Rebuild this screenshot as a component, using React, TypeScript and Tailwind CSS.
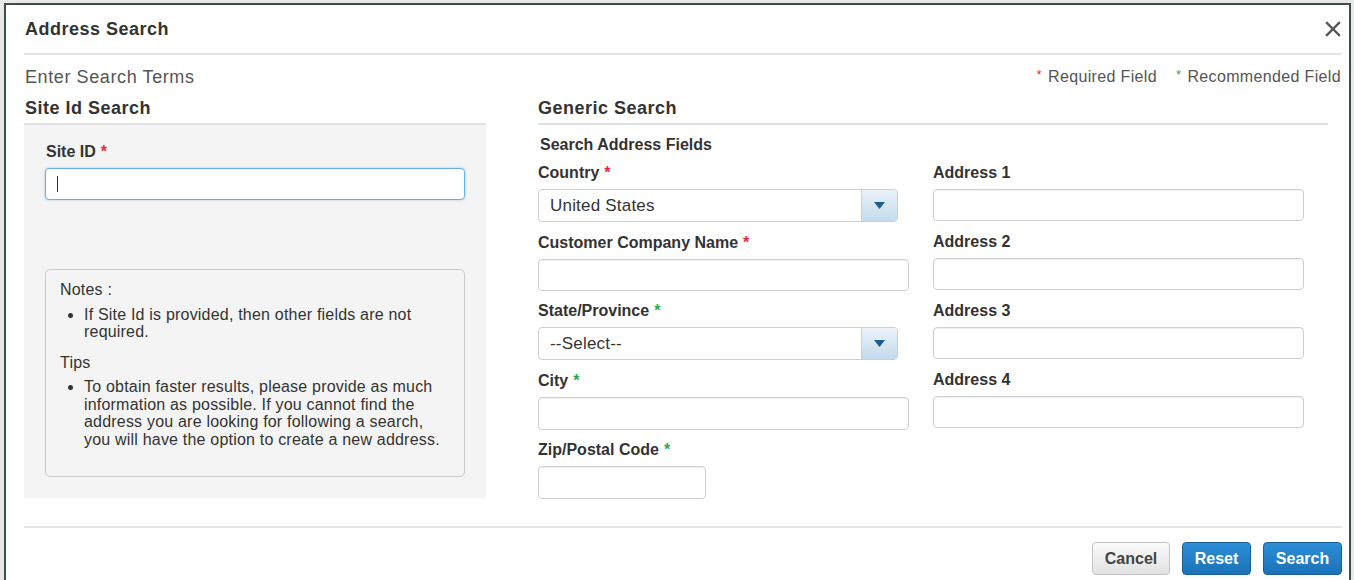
import React from "react";

const font = { fontFamily: '"Liberation Sans", Arial, sans-serif' };

function Star({ color }: { color: "red" | "green" }) {
	return (
		<span
			className={
				color === "red"
					? "ml-[5px] text-[#f0263c]"
					: "ml-[5px] text-[#2fa84f]"
			}
		>
			*
		</span>
	);
}

function Label({
	children,
	star,
}: {
	children: React.ReactNode;
	star?: "red" | "green";
}) {
	return (
		<div className="h-[20px] leading-[20px] text-[16px] font-bold text-[#333]">
			{children}
			{star && <Star color={star} />}
		</div>
	);
}

function TextInput({ w = "w-[371px]", h = "h-[32px]" }: { w?: string; h?: string }) {
	return (
		<input
			className={`${w} ${h} mt-[6px] rounded-[4px] border border-[#cfcfcf] bg-white px-3 text-[16px] text-[#333] shadow-[inset_0_1px_1px_rgba(0,0,0,0.06)] outline-none`}
		/>
	);
}

function Select({ value }: { value: string }) {
	return (
		<div className="mt-[6px] flex h-[33px] w-[360px] overflow-hidden rounded-[4px] border border-[#cfcfcf] bg-white">
			<div className="flex flex-1 items-center pl-[11px] text-[17px] tracking-[0.2px] text-[#333]">
				{value}
			</div>
			<div className="flex w-[36px] items-center justify-center border-l border-[#cfcfcf] bg-gradient-to-b from-[#eaf3fa] to-[#c3dbec]">
				<svg width="11" height="7" viewBox="0 0 11 7">
					<path d="M0 0h11L5.5 7z" fill="#1d5d8f" />
				</svg>
			</div>
		</div>
	);
}

function Field({
	label,
	star,
	children,
}: {
	label: string;
	star?: "red" | "green";
	children: React.ReactNode;
}) {
	return (
		<div className="flex flex-col">
			<Label star={star}>{label}</Label>
			{children}
		</div>
	);
}

export default function App() {
	return (
		<div
			className="h-[580px] w-[1354px] overflow-hidden bg-[#e8e8e8] pl-[4px] pr-[3px] pt-[3px]"
			style={font}
		>
			<div className="h-[600px] border-2 border-[#3e4c4c] bg-white pl-[18px] pr-[7px]">
				{/* header */}
				<div className="flex h-[50px] items-center justify-between border-b-2 border-[#e6e6e6]">
					<div className="pl-[1px] text-[18px] font-bold tracking-[0.5px] text-[#333]">
						Address Search
					</div>
					<svg width="16" height="16" viewBox="0 0 16 16" className="mr-[1px]">
						<path
							d="M2 2l12 12M14 2L2 14"
							stroke="#555"
							strokeWidth="2.4"
							strokeLinecap="square"
						/>
					</svg>
				</div>

				<div className="mt-[6px] flex h-[32px] items-center justify-between">
					<div className="pl-[1px] text-[18px] tracking-[0.6px] text-[#555]">
						Enter Search Terms
					</div>
					<div className="flex items-center gap-[19px] pr-[1px] text-[16px] tracking-[0.35px] text-[#555]">
						<span>
							<span className="relative -top-[3px] mr-[6px] text-[13px] text-[#f0263c]">*</span>
							Required Field
						</span>
						<span>
							<span className="relative -top-[3px] mr-[6px] text-[13px] text-[#2fa84f]">*</span>
							Recommended Field
						</span>
					</div>
				</div>

				<div className="flex gap-[52px]">
					{/* site id search */}
					<div className="w-[462px]">
						<div className="flex h-[32px] items-center border-b-2 border-[#e0e0e0] pl-[1px] text-[18px] font-bold tracking-[0.5px] text-[#333]">
							Site Id Search
						</div>
						<div className="bg-[#f4f4f4] px-[21px] pb-[21px] pt-[17px]">
							<div className="pl-[1px]">
								<Label star="red">Site ID</Label>
							</div>
							<div className="mt-[6px] flex h-[32px] items-center rounded-[4px] border border-[#66afe9] bg-white pl-[11px] shadow-[0_0_3px_rgba(102,175,233,0.5)]">
								<span className="h-[16px] w-[1px] bg-[#333]" />
							</div>
							<div className="mt-[69px] h-[208px] rounded-[5px] border border-[#cacaca] px-[14px] pt-[11px] text-[16px] leading-[17.5px] tracking-[0.2px] text-[#333]">
								<div>Notes :</div>
								<ul className="mt-[7px] list-disc pl-[24px]">
									<li>If Site Id is provided, then other fields are not required.</li>
								</ul>
								<div className="mt-[13px]">Tips</div>
								<ul className="mt-[7px] list-disc pl-[24px]">
									<li>
										To obtain faster results, please provide as much information as
										possible. If you cannot find the address you are looking for
										following a search, you will have the option to create a new
										address.
									</li>
								</ul>
							</div>
						</div>
					</div>

					{/* generic search */}
					<div className="w-[790px]">
						<div className="flex h-[32px] items-center border-b-2 border-[#e0e0e0] text-[18px] font-bold tracking-[0.5px] text-[#333]">
							Generic Search
						</div>
						<div className="pl-[2px] pt-[10px]">
							<Label>Search Address Fields</Label>
						</div>
						<div className="mt-[8px] flex gap-[24px]">
							<div className="flex w-[371px] flex-col gap-[10.5px]">
								<Field label="Country" star="red">
									<Select value="United States" />
								</Field>
								<Field label="Customer Company Name" star="red">
									<TextInput />
								</Field>
								<Field label="State/Province" star="green">
									<Select value="--Select--" />
								</Field>
								<Field label="City" star="green">
									<TextInput h="h-[33px]" />
								</Field>
								<Field label="Zip/Postal Code" star="green">
									<TextInput w="w-[168px]" h="h-[33px]" />
								</Field>
							</div>
							<div className="flex w-[371px] flex-col gap-[11px]">
								<Field label="Address 1">
									<TextInput />
								</Field>
								<Field label="Address 2">
									<TextInput />
								</Field>
								<Field label="Address 3">
									<TextInput />
								</Field>
								<Field label="Address 4">
									<TextInput />
								</Field>
							</div>
						</div>
					</div>
				</div>

				{/* footer */}
				<div className="mt-[27px] flex justify-end gap-[12px] border-t-2 border-[#e6e6e6] pt-[14px]">
					<button className="h-[33px] w-[78px] rounded-[4px] border border-[#c4c4c4] bg-gradient-to-b from-[#fafafa] to-[#e2e2e2] text-[16px] font-bold text-[#444]">
						Cancel
					</button>
					<button className="h-[33px] w-[69px] rounded-[4px] border border-[#1a5f96] bg-gradient-to-b from-[#2d8fd8] to-[#1b72b8] text-[16px] font-bold text-white">
						Reset
					</button>
					<button className="h-[33px] w-[79px] rounded-[4px] border border-[#1a5f96] bg-gradient-to-b from-[#2d8fd8] to-[#1b72b8] text-[16px] font-bold text-white">
						Search
					</button>
				</div>
			</div>
		</div>
	);
}
